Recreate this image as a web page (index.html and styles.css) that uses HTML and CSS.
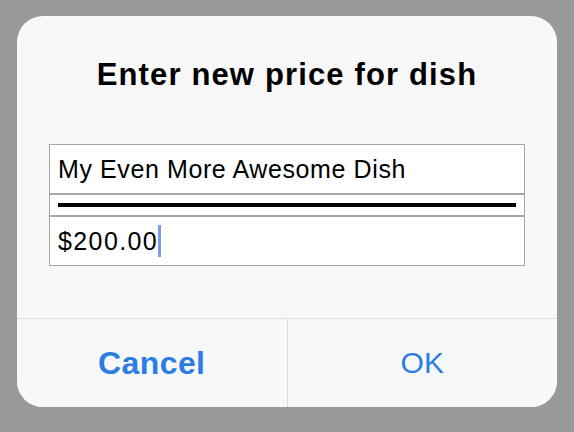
FILE: index.html
```html
<!DOCTYPE html>
<html>
<head>
<meta charset="utf-8">
<link rel="stylesheet" href="styles.css">
</head>
<body>
<div class="dialog">
  <div class="content">
    <h1 class="title">Enter new price for dish</h1>
    <div class="fields">
      <div class="field"><span class="value">My Even More Awesome Dish</span></div>
      <div class="field field-rule"><div class="rule"></div></div>
      <div class="field"><span class="value value-price">$200.00</span><span class="cursor"></span></div>
    </div>
  </div>
  <div class="actions">
    <div class="btn btn-cancel">Cancel</div>
    <div class="btn btn-ok">OK</div>
  </div>
</div>
</body>
</html>
```
FILE: styles.css
```css
html, body {
  margin: 0;
  padding: 0;
  background: #999999;
}
body {
  width: 574px;
  height: 432px;
  padding: 16px 17px 0;
  box-sizing: border-box;
  font-family: "Liberation Sans", Arial, sans-serif;
}
.dialog {
  width: 540px;
  height: 391px;
  background: #f8f8f8;
  border-radius: 26px;
  display: flex;
  flex-direction: column;
  overflow: hidden;
}
.content {
  height: 303px;
  padding: 41px 32px 0;
  box-sizing: border-box;
  border-bottom: 1px solid #dcdcdc;
}
.title {
  margin: 0;
  font-size: 31px;
  line-height: 36px;
  font-weight: bold;
  letter-spacing: 1.15px;
  text-align: center;
  color: #000;
}
.fields {
  margin-top: 51px;
  display: flex;
  flex-direction: column;
}
.field {
  background: #fff;
  border: 1px solid #a6a6a6;
  height: 50px;
  box-sizing: border-box;
  padding: 0 8px;
  display: flex;
  align-items: center;
}
.field-rule {
  height: 22px;
  padding: 0 8px;
}
.rule {
  flex: 1;
  height: 4px;
  background: #000;
}
.value {
  font-size: 25px;
  line-height: 48px;
  letter-spacing: 0.6px;
  color: #000;
}
.value-price {
  letter-spacing: 1.4px;
}
.cursor {
  width: 3px;
  height: 32px;
  background: #7f9ae6;
}
.actions {
  flex: 1;
  display: flex;
  background: #f7f8f9;
}
.btn {
  flex: 1;
  display: flex;
  align-items: center;
  justify-content: center;
  color: #2b7de1;
  font-size: 30px;
}
.btn-cancel {
  font-size: 32px;
  font-weight: bold;
  letter-spacing: 0.4px;
  border-right: 1px solid #dcdcdc;
}
```
